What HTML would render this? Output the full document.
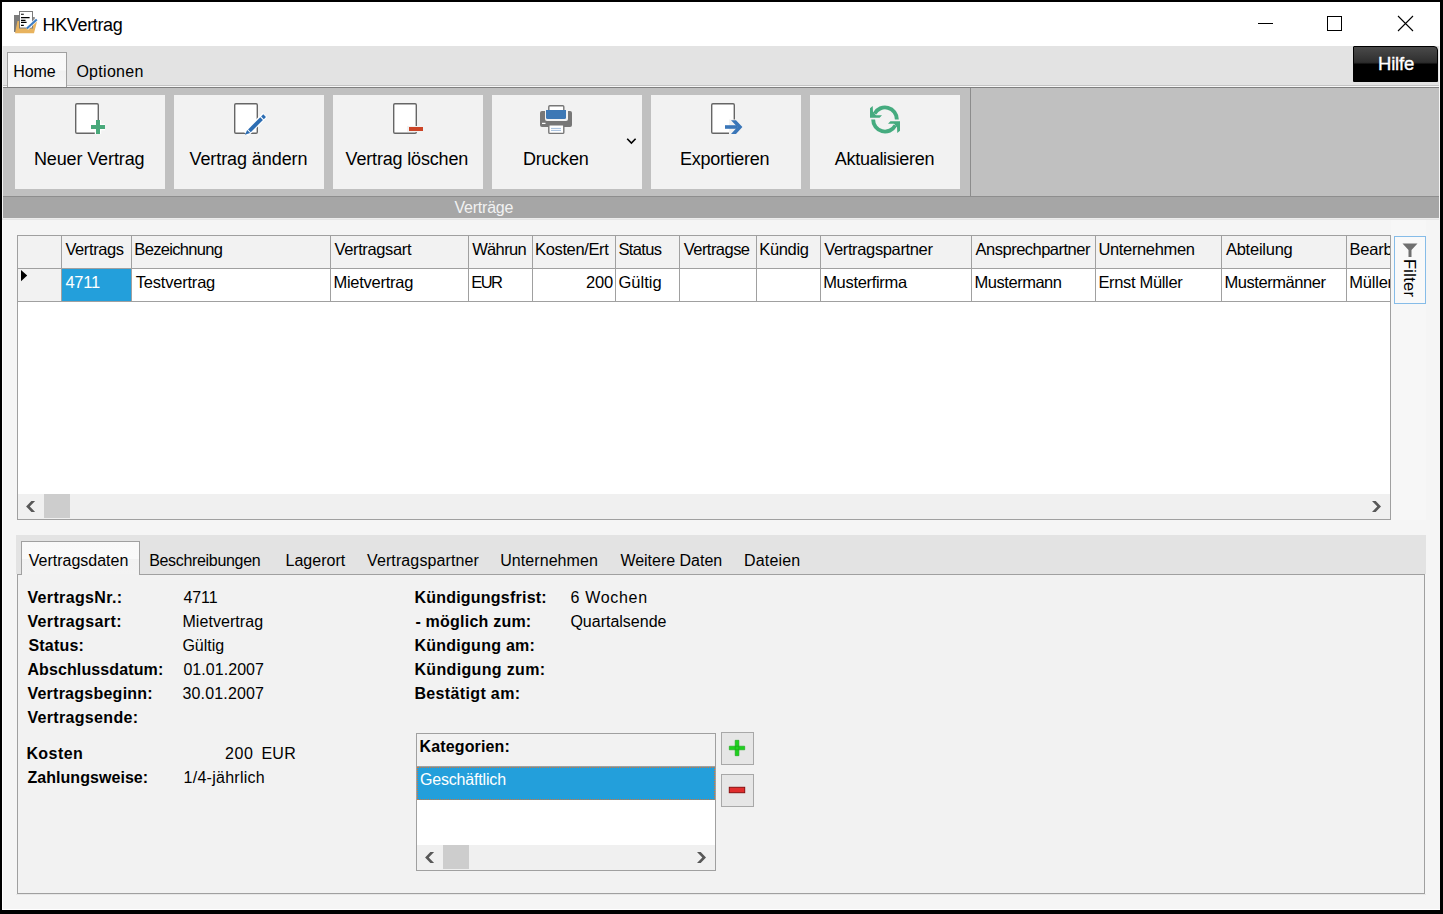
<!DOCTYPE html>
<html><head><meta charset="utf-8">
<style>
*{margin:0;padding:0;box-sizing:border-box}
html,body{width:1443px;height:914px;overflow:hidden;background:#000}
body{position:relative;font-family:"Liberation Sans",sans-serif;color:#000}
.a{position:absolute}
.t{position:absolute;white-space:nowrap;line-height:1}
.btn{position:absolute;top:95px;width:150px;height:94px;background:#f2f2f2}
</style></head><body>

<!-- window -->
<div class="a" style="left:2px;top:2px;width:1438px;height:908px;background:#f5f5f5"></div>
<div class="a" style="left:2px;top:220px;width:1px;height:690px;background:#fff"></div>
<div class="a" style="left:2px;top:909px;width:1438px;height:1px;background:#fff"></div>

<!-- title bar -->
<div class="a" style="left:2px;top:2px;width:1438px;height:44px;background:#fff"></div>
<svg class="a" style="left:10px;top:8px" width="30" height="28" viewBox="10 8 30 28">
  <rect x="14" y="15" width="5" height="17" fill="#7c7c7c"/>
  <rect x="32" y="17" width="2.8" height="5" fill="#8c8c8c"/>
  <path d="M17.5 21 L37 21.5 L34 33.3 L15 33.3 Z" fill="#e8b35e"/>
  <rect x="19.5" y="11.5" width="13" height="16.5" fill="#fff" stroke="#7a7a7a" stroke-width="1"/>
  <path d="M21 14.3h2.8 M21 17.6h8.6 M21 20.4h4.5 M21 22.4h5.6 M21 25.4h2.8" stroke="#000" stroke-width="1.1"/>
  <path d="M26.8 28.6 L36.8 19.4" stroke="#fff" stroke-width="3.6" opacity="0.8"/>
  <path d="M26.8 28.6 L36.8 19.4" stroke="#3b7cc4" stroke-width="2"/>
</svg>
<div class="a" style="left:1258px;top:23px;width:15px;height:1px;background:#000"></div>
<div class="a" style="left:1327px;top:16px;width:15px;height:15px;border:1px solid #000"></div>
<svg class="a" style="left:1397px;top:15px" width="17" height="17" viewBox="0 0 17 17"><path d="M1 1 L16 16 M16 1 L1 16" stroke="#000" stroke-width="1.1"/></svg>

<!-- tab strip -->
<div class="a" style="left:3px;top:46px;width:1436px;height:42px;background:#e3e3e3"></div>
<div class="a" style="left:3px;top:85px;width:1436px;height:1px;background:#c4c4c4"></div>
<div class="a" style="left:3px;top:86px;width:1436px;height:1px;background:#f8f8f8"></div>
<div class="a" style="left:3px;top:87px;width:1436px;height:1px;background:#7f7f7f"></div>
<div class="a" style="left:7px;top:52px;width:60px;height:35px;background:linear-gradient(#f8f8f8 0,#f9f9f9 50%,#f1f1f1 53%,#f6f6f6 100%);border:1px solid #a0a0a0;border-bottom:none"></div>

<!-- Hilfe -->
<div class="a" style="left:1353px;top:46px;width:85px;height:36px;background:linear-gradient(#4a4a4a 0,#2e2e2e 45%,#1c1c1c 48%,#000 50%,#000 100%);border-radius:1px 4px 0 0;border:1px solid #000"></div>

<!-- ribbon panel -->
<div class="a" style="left:3px;top:88px;width:1436px;height:108px;background:#c0c0c0"></div>
<div class="a" style="left:970px;top:88px;width:1px;height:108px;background:#8c8c8c"></div>
<div class="a" style="left:3px;top:196px;width:1436px;height:1px;background:#8e8e8e"></div>
<div class="a" style="left:3px;top:197px;width:1436px;height:21px;background:#a6a6a6"></div>
<div class="a" style="left:2px;top:218px;width:1437px;height:1px;background:#ececec"></div>
<div class="a" style="left:2px;top:219px;width:1437px;height:1px;background:#e5e5e5"></div>

<div class="btn" style="left:15px"></div>
<div class="btn" style="left:174px"></div>
<div class="btn" style="left:333px"></div>
<div class="btn" style="left:492px"></div>
<div class="btn" style="left:651px"></div>
<div class="btn" style="left:810px"></div>

<!-- icons -->
<svg class="a" style="left:70px;top:100px" width="40" height="40" viewBox="0 0 40 40">
  <rect x="5.7" y="3.7" width="22.6" height="29.6" rx="1.2" fill="#fff" stroke="#666" stroke-width="1.4"/>
  <path d="M21 27h14M28 20v14" stroke="#fff" stroke-width="6.4"/>
  <path d="M21 27h14M28 20v14" stroke="#4aa97b" stroke-width="4"/>
</svg>
<svg class="a" style="left:229px;top:100px" width="40" height="40" viewBox="0 0 40 40">
  <rect x="5.7" y="3.7" width="22.6" height="29.6" rx="1.2" fill="#fff" stroke="#666" stroke-width="1.4"/>
  <path d="M17 34 L36 15" stroke="#fff" stroke-width="6.4"/>
  <path d="M20.4 30.9 L32.6 18.7" stroke="#2c6db3" stroke-width="3.8" stroke-linecap="butt"/>
  <path d="M33.5 17.8 L35.6 15.7" stroke="#2c6db3" stroke-width="3.8"/>
  <path d="M15.9 34.8 L18.2 29.9 L21.2 32.9 Z" fill="#2c6db3"/>
</svg>
<svg class="a" style="left:388px;top:100px" width="40" height="40" viewBox="0 0 40 40">
  <rect x="5.7" y="3.7" width="22.6" height="29.6" rx="1.2" fill="#fff" stroke="#666" stroke-width="1.4"/>
  <rect x="19" y="26" width="19" height="6" fill="#f2f2f2"/>
  <rect x="21" y="27" width="14" height="4" fill="#cc4426"/>
</svg>
<svg class="a" style="left:536px;top:100px" width="40" height="40" viewBox="0 0 40 40">
  <rect x="12.8" y="5.8" width="15" height="8" rx="1" fill="#fff" stroke="#777" stroke-width="1.4"/>
  <rect x="4" y="11" width="32" height="16" rx="2" fill="#777"/>
  <path d="M9 10 H32 V19 Q32 21 30 21 H11 Q9 21 9 19 Z" fill="#f2f2f2"/>
  <path d="M10 10 H30 V17.5 Q30 19 28.5 19 H11.5 Q10 19 10 17.5 Z" fill="#3d78b5"/>
  <rect x="6" y="22.8" width="3.5" height="1.2" fill="#fff"/>
  <rect x="12.8" y="24.8" width="15" height="8.6" rx="1" fill="#fff" stroke="#777" stroke-width="1.4"/>
  <path d="M15 28.4h10M15 30.4h10" stroke="#a3bddd" stroke-width="1"/>
</svg>
<svg class="a" style="left:624px;top:136px" width="14" height="10" viewBox="0 0 14 10"><path d="M3.2 2.8 L7.4 7 L11.6 2.8" fill="none" stroke="#000" stroke-width="1.6"/></svg>
<svg class="a" style="left:706px;top:100px" width="40" height="40" viewBox="0 0 40 40">
  <rect x="5.7" y="3.7" width="22.6" height="29.6" rx="1.2" fill="#fff" stroke="#666" stroke-width="1.4"/>
  <path d="M23 19.5 L31 19.5 L38 27 L31 35 L23 35 Z" fill="#f2f2f2"/>
  <path d="M19 25.2 H31 V28.8 H19 Z" fill="#3a76b8"/>
  <path d="M25 20.2 H30 L36.4 27 L30 34.1 H25 L31.4 27 Z" fill="#3a76b8"/>
</svg>
<svg class="a" style="left:865px;top:100px" width="40" height="40" viewBox="865 100 40 40">
  <path d="M896.85 119.4 A11.85 11.85 0 0 0 874.6 113.6" fill="none" stroke="#45ab7f" stroke-width="3.9"/>
  <path d="M873.15 119.6 A11.85 11.85 0 0 0 895.4 125.4" fill="none" stroke="#45ab7f" stroke-width="3.9"/>
  <path d="M872.7 105.9 L870 108.3 L870 117.7 L879.6 117.7 L882 115.2 L876 115.2 L873 112 Z" fill="#45ab7f"/>
  <path d="M897.3 133.1 L900 130.7 L900 121.3 L890.4 121.3 L888 123.8 L894 123.8 L897 127 Z" fill="#45ab7f"/>
</svg>

<!-- grid panel -->
<div class="a" style="left:1391px;top:220px;width:35px;height:300px;background:#f7f7f7"></div>
<div class="a" style="left:17px;top:235px;width:1374px;height:285px;background:#fff;border:1px solid #a0a0a0"></div>
<div class="a" style="left:18px;top:236px;width:1372px;height:32px;background:#f2f2f2"></div>
<div class="a" style="left:18px;top:268px;width:1372px;height:1px;background:#a0a0a0"></div>
<div class="a" style="left:18px;top:269px;width:43px;height:32px;background:#f2f2f2"></div>
<div class="a" style="left:18px;top:301px;width:1372px;height:1px;background:#a0a0a0"></div>
<div class="a" style="left:62px;top:269px;width:69px;height:32px;background:#239fdb"></div>
<div class="a" style="left:61px;top:236px;width:1px;height:65px;background:#a0a0a0"></div>
<div class="a" style="left:131px;top:236px;width:1px;height:65px;background:#a0a0a0"></div>
<div class="a" style="left:330px;top:236px;width:1px;height:65px;background:#a0a0a0"></div>
<div class="a" style="left:468px;top:236px;width:1px;height:65px;background:#a0a0a0"></div>
<div class="a" style="left:532px;top:236px;width:1px;height:65px;background:#a0a0a0"></div>
<div class="a" style="left:615px;top:236px;width:1px;height:65px;background:#a0a0a0"></div>
<div class="a" style="left:679px;top:236px;width:1px;height:65px;background:#a0a0a0"></div>
<div class="a" style="left:756px;top:236px;width:1px;height:65px;background:#a0a0a0"></div>
<div class="a" style="left:820px;top:236px;width:1px;height:65px;background:#a0a0a0"></div>
<div class="a" style="left:971px;top:236px;width:1px;height:65px;background:#a0a0a0"></div>
<div class="a" style="left:1095px;top:236px;width:1px;height:65px;background:#a0a0a0"></div>
<div class="a" style="left:1221px;top:236px;width:1px;height:65px;background:#a0a0a0"></div>
<div class="a" style="left:1346px;top:236px;width:1px;height:65px;background:#a0a0a0"></div>

<div class="a" style="left:1347px;top:236px;width:43px;height:65px;overflow:hidden"><div class="t" style="left:2.4px;top:5.1px;font-size:16.5px;letter-spacing:-0.2px">Bearbeiter</div><div class="t" style="left:2.2px;top:37.9px;font-size:16.5px;letter-spacing:-0.2px">Müller</div></div>
<svg class="a" style="left:20px;top:269px" width="10" height="14" viewBox="0 0 10 14"><path d="M1 1 L7.2 6.6 L1 12.2 Z" fill="#000"/></svg>
<!-- grid scrollbar -->
<div class="a" style="left:18px;top:494px;width:1372px;height:25px;background:#f0f0f0"></div>
<div class="a" style="left:44px;top:494px;width:26px;height:24px;background:#cdcdcd"></div>
<!-- filter button -->
<div class="a" style="left:1394px;top:236px;width:32px;height:68px;background:#f9f9f9;border:1px solid #86bce8"></div>
<svg class="a" style="left:1400px;top:241px" width="20" height="20" viewBox="0 0 20 20"><path d="M2.5 2.5 H17.5 L11.5 9 V16 H8.5 V9 Z" fill="#707070"/></svg>
<div class="t" style="left:1418px;top:259px;font-size:16.5px;letter-spacing:0.25px;transform-origin:0 0;transform:rotate(90deg)">Filter</div>

<!-- details -->
<div class="a" style="left:16px;top:535px;width:1410px;height:39px;background:#e3e3e3"></div>
<div class="a" style="left:21px;top:541px;width:119px;height:34px;background:linear-gradient(#f9f9f9 0,#fafafa 50%,#f2f2f2 52%,#f3f3f3 100%);border:1px solid #a0a0a0;border-bottom:none"></div>
<div class="a" style="left:16px;top:894px;width:1410px;height:1px;background:#e8e8e8"></div>
<div class="a" style="left:17px;top:574px;width:1408px;height:320px;background:#f2f2f2;border:1px solid #a0a0a0;border-top:none"></div>
<div class="a" style="left:17px;top:574px;width:5px;height:1px;background:#a0a0a0"></div>
<div class="a" style="left:139px;top:574px;width:1286px;height:1px;background:#a0a0a0"></div>

<!-- Kategorien box -->
<div class="a" style="left:416px;top:733px;width:300px;height:138px;background:#fff;border:1px solid #a0a0a0"></div>
<div class="a" style="left:417px;top:734px;width:298px;height:32px;background:#f2f2f2"></div>
<div class="a" style="left:417px;top:766px;width:298px;height:1px;background:#a0a0a0"></div>
<div class="a" style="left:417px;top:767px;width:298px;height:33px;background:#239fdb;border:1px dotted #d2773a"></div>
<div class="a" style="left:417px;top:845px;width:298px;height:25px;background:#f0f0f0"></div>
<div class="a" style="left:443px;top:845px;width:26px;height:24px;background:#cdcdcd"></div>
<div class="a" style="left:721px;top:732px;width:33px;height:33px;background:#e6e6e6;border:1px solid #a8a8a8"></div>
<div class="a" style="left:721px;top:774px;width:33px;height:33px;background:#e6e6e6;border:1px solid #a8a8a8"></div>
<svg class="a" style="left:721px;top:732px" width="33" height="33" viewBox="0 0 33 33">
  <path d="M8.3 14.2 H23.7 V17.8 H8.3 Z M14.2 8.3 H17.9 V23.7 H14.2 Z" fill="#1fd11f" stroke="#17a317" stroke-width="0.6"/>
</svg>
<svg class="a" style="left:721px;top:774px" width="33" height="33" viewBox="0 0 33 33">
  <rect x="8.3" y="13.3" width="15.4" height="5.4" fill="#e02c2c" stroke="#8a0e0e" stroke-width="1"/>
</svg>
<svg class="a" style="left:0;top:0" width="1443" height="914" viewBox="0 0 1443 914">
  <path d="M26.1 506.4 L31.4 501 L35.1 501 L29.8 506.4 L35.1 511.9 L31.4 511.9 Z" fill="#585858"/>
  <path d="M1381 506.4 L1375.7 501 L1372 501 L1377.3 506.4 L1372 511.9 L1375.7 511.9 Z" fill="#585858"/>
  <path d="M425.1 857.4 L430.4 852 L434.1 852 L428.8 857.4 L434.1 862.9 L430.4 862.9 Z" fill="#585858"/>
  <path d="M706 857.4 L700.7 852 L697 852 L702.3 857.4 L697 862.9 L700.7 862.9 Z" fill="#585858"/>
</svg>
<div class="t" style="left:42.50px;top:16.36px;font-size:18.00px;letter-spacing:-0.350px">HKVertrag</div>
<div class="t" style="left:13.20px;top:64.15px;font-size:16.00px;letter-spacing:-0.033px">Home</div>
<div class="t" style="left:76.40px;top:63.85px;font-size:16.00px;letter-spacing:0.286px">Optionen</div>
<div class="t" style="left:1378.00px;top:54.84px;font-size:18.50px;color:#fff;letter-spacing:-0.175px;-webkit-text-stroke:0.35px #fff">Hilfe</div>
<div class="t" style="left:33.90px;top:150.26px;font-size:18.00px;letter-spacing:-0.117px">Neuer Vertrag</div>
<div class="t" style="left:189.50px;top:150.26px;font-size:18.00px;letter-spacing:-0.085px">Vertrag ändern</div>
<div class="t" style="left:345.60px;top:150.26px;font-size:18.00px;letter-spacing:-0.171px">Vertrag löschen</div>
<div class="t" style="left:522.90px;top:150.26px;font-size:18.00px;letter-spacing:-0.200px">Drucken</div>
<div class="t" style="left:680.00px;top:150.26px;font-size:18.00px;letter-spacing:-0.260px">Exportieren</div>
<div class="t" style="left:834.70px;top:150.26px;font-size:18.00px;letter-spacing:-0.267px">Aktualisieren</div>
<div class="t" style="left:454.50px;top:199.65px;font-size:16.00px;color:#f2f2f2;letter-spacing:-0.229px">Verträge</div>
<div class="t" style="left:65.40px;top:241.13px;font-size:16.50px;letter-spacing:-0.400px">Vertrags</div>
<div class="t" style="left:134.30px;top:241.13px;font-size:16.50px;letter-spacing:-0.670px">Bezeichnung</div>
<div class="t" style="left:334.50px;top:241.13px;font-size:16.50px;letter-spacing:-0.370px">Vertragsart</div>
<div class="t" style="left:472.20px;top:241.13px;font-size:16.50px;letter-spacing:-0.660px">Währun</div>
<div class="t" style="left:535.10px;top:241.13px;font-size:16.50px;letter-spacing:-0.378px">Kosten/Ert</div>
<div class="t" style="left:618.40px;top:241.13px;font-size:16.50px;letter-spacing:-0.620px">Status</div>
<div class="t" style="left:683.70px;top:241.13px;font-size:16.50px;letter-spacing:-0.537px">Vertragse</div>
<div class="t" style="left:759.30px;top:241.13px;font-size:16.50px;letter-spacing:-0.360px">Kündig</div>
<div class="t" style="left:824.20px;top:241.13px;font-size:16.50px;letter-spacing:-0.357px">Vertragspartner</div>
<div class="t" style="left:975.60px;top:241.13px;font-size:16.50px;letter-spacing:-0.514px">Ansprechpartner</div>
<div class="t" style="left:1098.40px;top:241.13px;font-size:16.50px;letter-spacing:-0.340px">Unternehmen</div>
<div class="t" style="left:1225.90px;top:241.13px;font-size:16.50px;letter-spacing:-0.238px">Abteilung</div>
<div class="t" style="left:65.40px;top:273.93px;font-size:16.50px;color:#fff;letter-spacing:-0.200px">4711</div>
<div class="t" style="left:135.70px;top:273.93px;font-size:16.50px;letter-spacing:-0.200px">Testvertrag</div>
<div class="t" style="left:333.50px;top:273.93px;font-size:16.50px;letter-spacing:-0.270px">Mietvertrag</div>
<div class="t" style="left:471.20px;top:273.93px;font-size:16.50px;letter-spacing:-1.500px">EUR</div>
<div class="t" style="left:586.00px;top:273.93px;font-size:16.50px;letter-spacing:-0.150px">200</div>
<div class="t" style="left:618.40px;top:273.93px;font-size:16.50px;letter-spacing:0.040px">Gültig</div>
<div class="t" style="left:823.20px;top:273.93px;font-size:16.50px;letter-spacing:-0.320px">Musterfirma</div>
<div class="t" style="left:974.60px;top:273.93px;font-size:16.50px;letter-spacing:-0.478px">Mustermann</div>
<div class="t" style="left:1098.40px;top:273.93px;font-size:16.50px;letter-spacing:-0.336px">Ernst Müller</div>
<div class="t" style="left:1224.40px;top:273.93px;font-size:16.50px;letter-spacing:-0.427px">Mustermänner</div>
<div class="t" style="left:28.70px;top:552.85px;font-size:16.00px">Vertragsdaten</div>
<div class="t" style="left:149.20px;top:552.85px;font-size:16.00px;letter-spacing:-0.323px">Beschreibungen</div>
<div class="t" style="left:285.50px;top:552.85px;font-size:16.00px;letter-spacing:0.014px">Lagerort</div>
<div class="t" style="left:367.00px;top:552.85px;font-size:16.00px;letter-spacing:0.114px">Vertragspartner</div>
<div class="t" style="left:500.20px;top:552.85px;font-size:16.00px;letter-spacing:0.070px">Unternehmen</div>
<div class="t" style="left:620.40px;top:552.85px;font-size:16.00px;letter-spacing:-0.017px">Weitere Daten</div>
<div class="t" style="left:744.10px;top:552.85px;font-size:16.00px;letter-spacing:0.150px">Dateien</div>
<div class="t" style="left:27.40px;top:589.85px;font-size:16.00px;font-weight:bold;letter-spacing:0.364px">VertragsNr.:</div>
<div class="t" style="left:183.40px;top:589.85px;font-size:16.00px;letter-spacing:-0.067px">4711</div>
<div class="t" style="left:27.40px;top:613.85px;font-size:16.00px;font-weight:bold;letter-spacing:0.391px">Vertragsart:</div>
<div class="t" style="left:182.40px;top:613.85px;font-size:16.00px;letter-spacing:0.070px">Mietvertrag</div>
<div class="t" style="left:28.50px;top:637.85px;font-size:16.00px;font-weight:bold;letter-spacing:0.183px">Status:</div>
<div class="t" style="left:182.40px;top:637.85px;font-size:16.00px">Gültig</div>
<div class="t" style="left:27.40px;top:661.85px;font-size:16.00px;font-weight:bold;letter-spacing:0.114px">Abschlussdatum:</div>
<div class="t" style="left:183.40px;top:661.85px;font-size:16.00px;letter-spacing:0.056px">01.01.2007</div>
<div class="t" style="left:27.40px;top:685.85px;font-size:16.00px;font-weight:bold;letter-spacing:0.250px">Vertragsbeginn:</div>
<div class="t" style="left:182.40px;top:685.85px;font-size:16.00px;letter-spacing:0.167px">30.01.2007</div>
<div class="t" style="left:27.40px;top:709.85px;font-size:16.00px;font-weight:bold;letter-spacing:0.333px">Vertragsende:</div>
<div class="t" style="left:26.40px;top:745.85px;font-size:16.00px;font-weight:bold;letter-spacing:0.420px">Kosten</div>
<div class="t" style="left:225.00px;top:745.85px;font-size:16.00px;letter-spacing:0.600px">200</div>
<div class="t" style="left:261.50px;top:745.85px;font-size:16.00px;letter-spacing:0.200px">EUR</div>
<div class="t" style="left:27.40px;top:769.75px;font-size:16.00px;font-weight:bold;letter-spacing:0.054px">Zahlungsweise:</div>
<div class="t" style="left:183.50px;top:769.75px;font-size:16.00px;letter-spacing:0.273px">1/4-jährlich</div>
<div class="t" style="left:414.40px;top:589.95px;font-size:16.00px;font-weight:bold;letter-spacing:0.227px">Kündigungsfrist:</div>
<div class="t" style="left:570.40px;top:589.95px;font-size:16.00px;letter-spacing:0.700px">6 Wochen</div>
<div class="t" style="left:415.40px;top:613.85px;font-size:16.00px;font-weight:bold;letter-spacing:0.223px">- möglich zum:</div>
<div class="t" style="left:570.40px;top:613.85px;font-size:16.00px">Quartalsende</div>
<div class="t" style="left:414.40px;top:637.85px;font-size:16.00px;font-weight:bold;letter-spacing:0.267px">Kündigung am:</div>
<div class="t" style="left:414.40px;top:661.85px;font-size:16.00px;font-weight:bold;letter-spacing:0.346px">Kündigung zum:</div>
<div class="t" style="left:414.40px;top:685.85px;font-size:16.00px;font-weight:bold;letter-spacing:0.358px">Bestätigt am:</div>
<div class="t" style="left:419.50px;top:738.65px;font-size:16.00px;font-weight:bold;letter-spacing:0.140px">Kategorien:</div>
<div class="t" style="left:420.00px;top:771.95px;font-size:16.00px;color:#fff;letter-spacing:-0.182px">Geschäftlich</div>
</body></html>
